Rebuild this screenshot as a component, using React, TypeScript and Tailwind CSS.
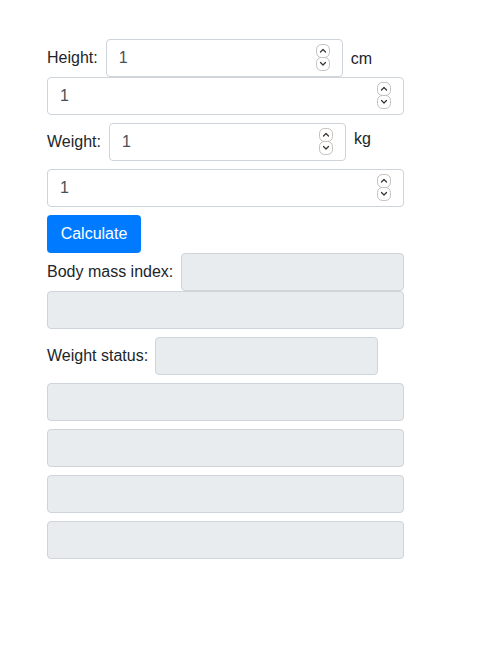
import React from "react";

const inputBase =
  "box-border block h-[38px] px-[12px] py-[6px] text-[16px] leading-[24px] text-[#495057] border border-[#ced4da] rounded-[4px] outline-none";

function Spin() {
  return (
    <svg
      width="14"
      height="27"
      viewBox="0 0 14 27"
      className="absolute right-[13px] top-[5px] pointer-events-none"
    >
      <rect x="0.5" y="0.5" width="13" height="13" rx="5" fill="white" stroke="#c4bfba" />
      <rect x="0.5" y="13.5" width="13" height="13" rx="5" fill="white" stroke="#c4bfba" />
      <path d="M4.5 8 L7 5.5 L9.5 8" fill="none" stroke="#333" strokeWidth="1.2" strokeLinecap="round" strokeLinejoin="round" />
      <path d="M4.5 18.5 L7 21 L9.5 18.5" fill="none" stroke="#333" strokeWidth="1.2" strokeLinecap="round" strokeLinejoin="round" />
    </svg>
  );
}

function NumInput({ className }: { className: string }) {
  return (
    <div className={`relative shrink-0 ${className}`}>
      <input
        type="number"
        defaultValue="1"
        className={`${inputBase} w-full bg-white [appearance:textfield] [&::-webkit-inner-spin-button]:appearance-none [&::-webkit-outer-spin-button]:appearance-none`}
      />
      <Spin />
    </div>
  );
}

function RO({ className }: { className: string }) {
  return <input type="text" readOnly className={`${inputBase} shrink-0 bg-[#e9ecef] ${className}`} />;
}

export default function App() {
  return (
    <div
      className="min-h-[648px] bg-white pt-[39px] pl-[47px] text-[16px] leading-[24px] text-[#212529]"
      style={{ fontFamily: '"Liberation Sans", Arial, sans-serif' }}
    >
      <div className="w-[357px] flex flex-col">
        <div className="flex items-center whitespace-nowrap">
          <label className="mr-[8px]">Height:</label>
          <NumInput className="w-[237px]" />
          <span className="ml-[8px] mt-[2px]">cm</span>
        </div>
        <NumInput className="w-[357px]" />
        <div className="flex items-center mt-[8px] whitespace-nowrap">
          <label className="mr-[8px]">Weight:</label>
          <NumInput className="w-[237px]" />
          <span className="ml-[8px] -mt-[6px]">kg</span>
        </div>
        <NumInput className="w-[357px] mt-[8px]" />
        <div className="mt-[8px]">
          <button className="h-[38px] w-[94px] bg-[#007bff] text-white rounded-[4px] text-[16px] leading-[24px]">
            Calculate
          </button>
        </div>
        <div className="flex items-center whitespace-nowrap">
          <label className="mr-[8px]">Body mass index:</label>
          <RO className="w-[223px]" />
        </div>
        <RO className="w-[357px]" />
        <div className="flex items-center mt-[8px] whitespace-nowrap">
          <label className="mr-[7px]">Weight status:</label>
          <RO className="w-[223px]" />
        </div>
        <RO className="w-[357px] mt-[8px]" />
        <RO className="w-[357px] mt-[8px]" />
        <RO className="w-[357px] mt-[8px]" />
        <RO className="w-[357px] mt-[8px]" />
      </div>
    </div>
  );
}
